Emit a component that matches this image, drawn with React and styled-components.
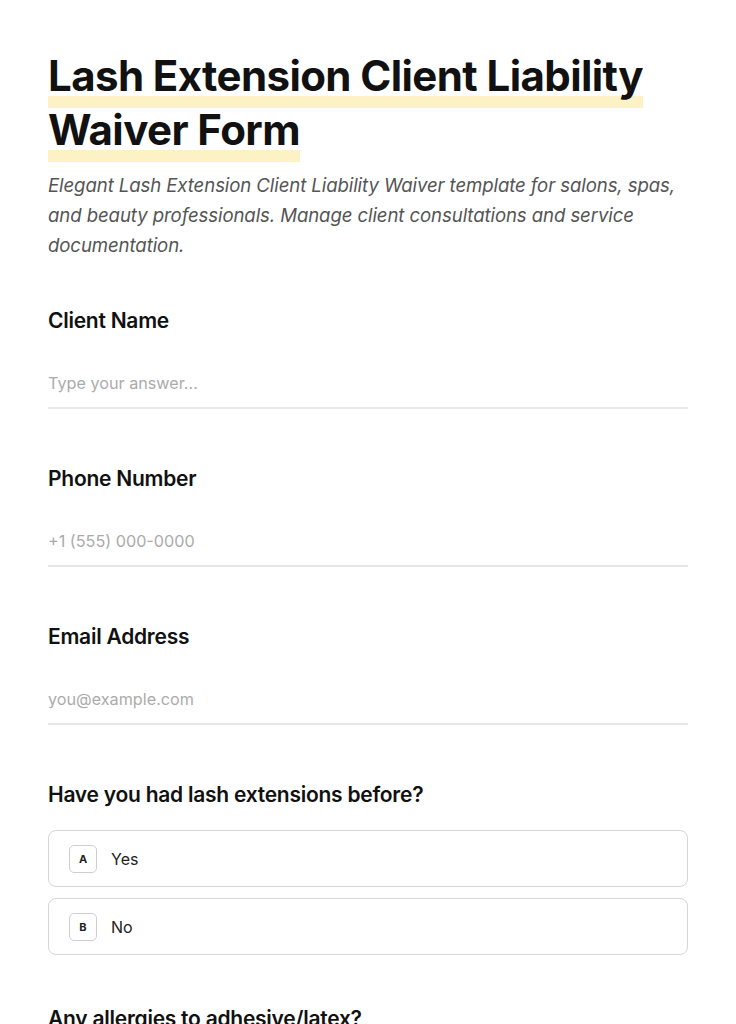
import React from "react";
import styled, { createGlobalStyle } from "styled-components";

const Global = createGlobalStyle`
  html, body { margin: 0; padding: 0; background: #fff; }
  body { font-family: Inter, "Noto Sans", sans-serif; color: #111; }
  * { box-sizing: border-box; }
`;

const Page = styled.main`
  padding: 49px 48px 0 48px;
  max-width: 736px;
`;

const Title = styled.h1`
  margin: 0;
  font-size: 42px;
  line-height: 54px;
  font-weight: 700;
  letter-spacing: -0.014em;
  color: #111;
`;

const Mark = styled.span`
  padding-bottom: 7px;
  -webkit-box-decoration-break: clone;
  box-decoration-break: clone;
  background: linear-gradient(
    to bottom,
    transparent calc(100% - 12px),
    #fdf1c6 calc(100% - 12px)
  );
`;

const Subtitle = styled.p`
  margin: 13px 0 0;
  font-size: 18.6px;
  line-height: 30px;
  font-style: italic;
  color: #555;
  letter-spacing: -0.005em;
`;

const Field = styled.section`
  margin-top: ${(p) => p.$top || 47}px;
`;

const Label = styled.h2`
  margin: 0;
  font-size: 21px;
  line-height: 28px;
  font-weight: 600;
  letter-spacing: -0.012em;
  color: #111;
`;

const Input = styled.input`
  display: block;
  width: 100%;
  margin-top: 24px;
  padding: 12px 0;
  border: none;
  border-bottom: 2px solid #e6e6e6;
  outline: none;
  font-family: inherit;
  font-size: 16.2px;
  line-height: 24px;
  color: #111;
  background: transparent;
  &::placeholder { color: #ababab; }
`;

const Options = styled.div`
  margin-top: 21px;
  display: flex;
  flex-direction: column;
  gap: 11px;
`;

const Option = styled.label`
  display: flex;
  align-items: center;
  gap: 14px;
  height: 57px;
  padding: 0 20px;
  border: 1px solid #d6d6d6;
  border-radius: 8px;
  font-size: 16px;
  color: #222;
  cursor: pointer;
`;

const Key = styled.span`
  display: inline-flex;
  align-items: center;
  justify-content: center;
  width: 28px;
  height: 28px;
  border: 1px solid #cfcfcf;
  border-radius: 5px;
  font-size: 11px;
  font-weight: 700;
  color: #222;
`;

export default function App() {
  return (
    <>
      <Global />
      <Page>
        <Title>
          <Mark>Lash Extension Client Liability Waiver Form</Mark>
        </Title>
        <Subtitle>
          Elegant Lash Extension Client Liability Waiver template for salons, spas,
          and beauty professionals. Manage client consultations and service
          documentation.
        </Subtitle>

        <Field>
          <Label>Client Name</Label>
          <Input placeholder="Type your answer..." />
        </Field>
        <Field $top={56}>
          <Label>Phone Number</Label>
          <Input placeholder="+1 (555) 000-0000" />
        </Field>
        <Field $top={56}>
          <Label>Email Address</Label>
          <Input placeholder="you@example.com" />
        </Field>
        <Field $top={56}>
          <Label>Have you had lash extensions before?</Label>
          <Options>
            <Option>
              <Key>A</Key>
              Yes
            </Option>
            <Option>
              <Key>B</Key>
              No
            </Option>
          </Options>
        </Field>
        <Field $top={50}>
          <Label>Any allergies to adhesive/latex?</Label>
        </Field>
      </Page>
    </>
  );
}
